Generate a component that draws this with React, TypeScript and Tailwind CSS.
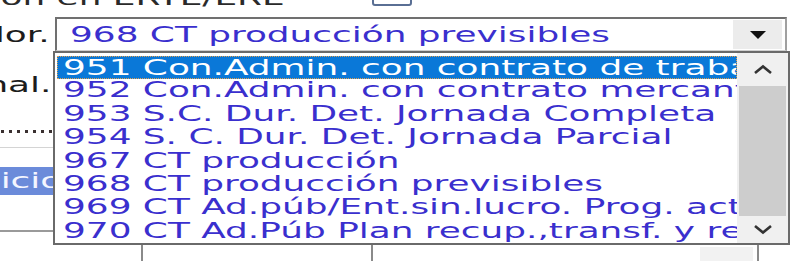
import React from 'react';

const options = [
  '951 Con.Admin. con contrato de trabajo',
  '952 Con.Admin. con contrato mercantil',
  '953 S.C. Dur. Det. Jornada Completa',
  '954 S. C. Dur. Det. Jornada Parcial',
  '967 CT producción',
  '968 CT producción previsibles',
  '969 CT Ad.púb/Ent.sin.lucro. Prog. activación',
  '970 CT Ad.Púb Plan recup.,transf. y resiliencia',
];

const font = { fontFamily: '"DejaVu Sans", Verdana, sans-serif' };

// the capture is stretched sideways, so the text is widened to match
const Wide = ({ children, right = false }: { children: React.ReactNode; right?: boolean }) => (
  <span className={`inline-block whitespace-nowrap scale-x-[1.63] ${right ? 'origin-right' : 'origin-left'}`}>
    {children}
  </span>
);

const ChevronUp = () => (
  <svg width="20" height="11" viewBox="0 0 20 11">
    <path d="M2 9 L10 2.5 L18 9" fill="none" stroke="#333" strokeWidth="2.6" />
  </svg>
);

const ChevronDown = () => (
  <svg width="20" height="11" viewBox="0 0 20 11">
    <path d="M2 2 L10 8.5 L18 2" fill="none" stroke="#333" strokeWidth="2.6" />
  </svg>
);

export default function App() {
  return (
    <div
      className="relative w-[800px] h-[261px] overflow-hidden bg-white text-[22px] text-[#1c1c1c]"
      style={font}
    >
      {/* top row */}
      <div className="flex h-[17px]">
        <div className="w-[300px] h-[24px] -mt-[14px] flex justify-end overflow-hidden leading-[24px] pr-[15px] text-[#2a2a2a]">
          <Wide right>Situación en ERTE/ERE</Wide>
        </div>
        <div className="ml-[72px] w-[40px] h-[24px] -mt-[18px] border-2 border-[#5a6f94] rounded-[3px]" />
      </div>

      {/* select row */}
      <div className="flex">
        <div className="w-[55px] h-[34px] flex justify-end items-center overflow-hidden leading-[30px] pr-[5px] pt-[2px]">
          <Wide right>Tipo contrato trabajador.</Wide>
        </div>
        <div className="w-[732px] h-[34px] flex border-t-2 border-l-2 border-[#707070] border-r-2 border-r-[#a0a0a0] border-b border-b-[#d0d0d0] bg-white">
          <div className="flex-1 pl-[13px] leading-[31px] text-[#3a2fce] overflow-hidden">
            <Wide>968 CT producción previsibles</Wide>
          </div>
          <div className="w-[49px] my-[1px] mr-[3px] bg-[#ececec] flex items-center justify-center">
            <svg width="16" height="8" viewBox="0 0 16 8">
              <path d="M0 0 L16 0 L8 8 Z" fill="#111" />
            </svg>
          </div>
        </div>
      </div>

      {/* left column below */}
      <div className="w-[55px] flex flex-col">
        <div className="h-[48px] flex justify-end items-end overflow-hidden leading-[24px] pr-[4px] pb-[2px]">
          <Wide right>Código ocupacional.</Wide>
        </div>
        <div className="h-[34px] flex items-end gap-[5px] pl-[1px]">
          {[0, 1, 2, 3, 4, 5, 6].map((d) => (
            <span key={d} className="w-[3px] h-[3px] bg-[#3a3030]" />
          ))}
        </div>
        <div className="h-[15px] border-b border-[#d4d4d4]" />
        <div className="mt-[19px] h-[28px] w-[90px] bg-[#6b8bda] text-[#f4f6ff] flex justify-end items-center overflow-hidden leading-[28px] pr-[28px]">
          <Wide right>Inicio</Wide>
        </div>
        <div className="h-[37px] border-b-2 border-[#9a9a9a]" />
      </div>

      {/* bottom grid lines */}
      <div className="absolute left-0 top-[245px] w-[800px] h-[16px]">
        <div className="absolute left-[141px] top-0 w-[2px] h-[16px] bg-[#8a8a8a]" />
        <div className="absolute left-[371px] top-0 w-[2px] h-[16px] bg-[#8a8a8a]" />
        <div className="absolute left-[700px] top-[2px] w-[53px] h-[14px] bg-[#f2f2f2]" />
        <div className="absolute left-[757px] top-0 w-[2px] h-[16px] bg-[#8a8a8a]" />
      </div>

      {/* open dropdown list */}
      <div className="absolute left-[53px] top-[51px] w-[737px] h-[194px] border-2 border-[#6a6a6a] bg-white flex">
        <div className="flex-1 pt-[3px] pl-[2px] overflow-hidden">
          {options.map((o, i) => (
            <div
              key={o}
              className={
                i === 0
                  ? 'h-[23.4px] leading-[21px] pl-[5px] overflow-hidden bg-[#0a78d8] text-white border border-dotted border-[#e0a050]'
                  : 'h-[23.4px] leading-[22px] pl-[6px] overflow-hidden text-[#3a2fce]'
              }
            >
              <Wide>{o}</Wide>
            </div>
          ))}
        </div>
        <div className="w-[51px] bg-[#f0f0f0] flex flex-col">
          <div className="h-[33px] flex items-center justify-center">
            <ChevronUp />
          </div>
          <div className="mx-[2px] h-[130px] bg-[#cdcdcd]" />
          <div className="flex-1 flex items-center justify-center">
            <ChevronDown />
          </div>
        </div>
      </div>
    </div>
  );
}
